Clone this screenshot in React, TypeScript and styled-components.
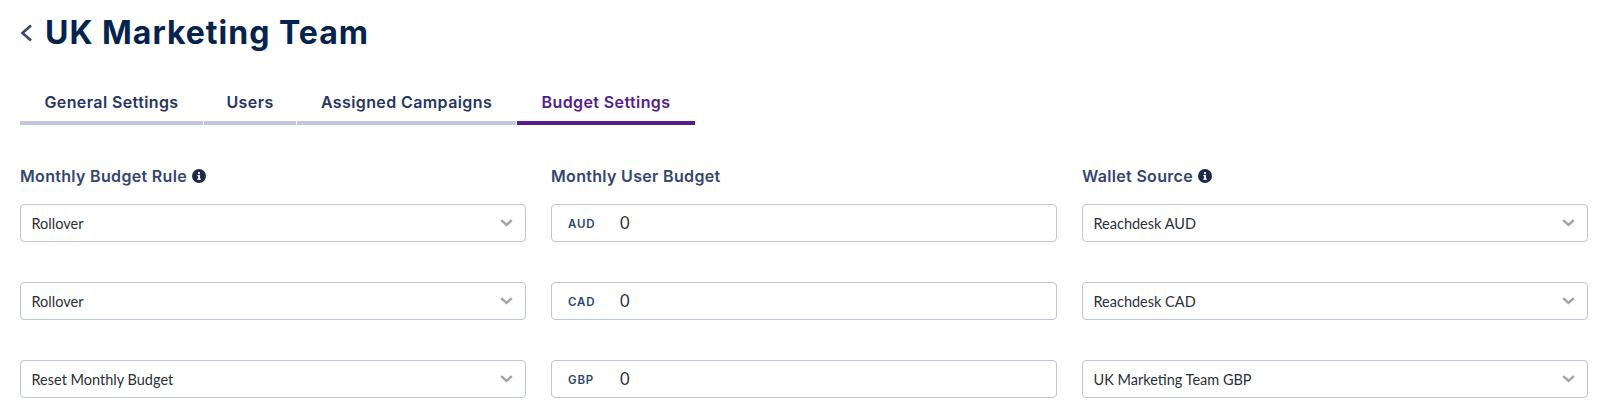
import React from "react";
import styled, { createGlobalStyle } from "styled-components";

const Global = createGlobalStyle`
  html, body { margin: 0; padding: 0; background: #fff; }
  body { font-family: Lato, "Liberation Sans", sans-serif; }
`;

const Page = styled.div`
  width: 1603px;
  height: 415px;
  box-sizing: border-box;
  padding: 12px 15px 0 20px;
  overflow: hidden;
`;

const Header = styled.header`
  display: flex;
  align-items: center;
  gap: 12px;
  height: 42px;
`;

const BackIcon = styled.svg`
  width: 13px;
  height: 18px;
  color: #3a4a70;
  flex: none;
`;

const Title = styled.h1`
  margin: 0;
  font: 700 32px/42px Inter, sans-serif;
  letter-spacing: 1px;
  color: #04234d;
`;

const Tabs = styled.nav`
  display: flex;
  gap: 1px;
  margin-top: 36px;
`;

const Tab = styled.div<{ $active?: boolean; $width: number }>`
  width: ${(p) => p.$width}px;
  box-sizing: border-box;
  height: 35px;
  text-align: center;
  font: 600 16px/25px Inter, sans-serif;
  letter-spacing: 0.4px;
  color: ${(p) => (p.$active ? "#561c8e" : "#28365f")};
  border-bottom: 4px solid ${(p) => (p.$active ? "#561c8e" : "#c0c6db")};
`;

const Grid = styled.div`
  display: grid;
  grid-template-columns: repeat(3, 1fr);
  column-gap: 25px;
  margin-top: 39px;
`;

const Column = styled.section`
  display: flex;
  flex-direction: column;
  gap: 40px;
`;

const Label = styled.div`
  display: flex;
  align-items: center;
  gap: 5px;
  height: 24px;
  margin-bottom: -24px;
  font: 600 16px/24px Inter, sans-serif;
  letter-spacing: 0.32px;
  color: #35456f;
`;

const Info = styled.svg`
  width: 14px;
  height: 14px;
  flex: none;
`;

const Field = styled.div`
  display: flex;
  align-items: center;
  height: 38px;
  box-sizing: border-box;
  background: #fff;
  border: 1px solid #bfc6dc;
  border-radius: 4px;
`;

const SelectField = styled(Field)`
  justify-content: space-between;
  padding: 1px 12px 0 10.5px;
  font: 400 14.5px/20px Lato, sans-serif;
  color: #2b2f36;
`;

const Chevron = styled.svg`
  width: 13px;
  height: 8px;
  color: #a3a3a3;
  flex: none;
  margin-top: -1px;
`;

const Currency = styled.span`
  width: 68px;
  box-sizing: border-box;
  padding: 1px 0 0 16px;
  font: 600 11.5px/16px Inter, sans-serif;
  letter-spacing: 0.8px;
  color: #2f4372;
`;

const Amount = styled.span`
  font: 400 16.5px/20px Lato, sans-serif;
  color: #2b2f36;
`;

const InfoIcon = () => (
  <Info viewBox="0 0 16 16" aria-hidden="true">
    <circle cx="8" cy="8" r="8" fill="#20294a" />
    <rect x="7" y="7" width="2.2" height="5" fill="#fff" />
    <rect x="6" y="7" width="2" height="1.2" fill="#fff" />
    <rect x="6" y="11" width="4.2" height="1.3" fill="#fff" />
    <circle cx="8" cy="4.6" r="1.3" fill="#fff" />
  </Info>
);

const Select = ({ value }: { value: string }) => (
  <SelectField>
    {value}
    <Chevron viewBox="0 0 13 8" fill="none" aria-hidden="true">
      <path d="M1.2 1.2 6.5 6l5.3-4.8" stroke="currentColor" strokeWidth="2.4" />
    </Chevron>
  </SelectField>
);

const Money = ({ code }: { code: string }) => (
  <Field>
    <Currency>{code}</Currency>
    <Amount>0</Amount>
  </Field>
);

const tabs = [
  { label: "General Settings", width: 183 },
  { label: "Users", width: 92 },
  { label: "Assigned Campaigns", width: 219 },
  { label: "Budget Settings", width: 178, active: true },
];

export default function App() {
  return (
    <Page>
      <Global />
      <Header>
        <BackIcon viewBox="0 0 13 18" fill="none" aria-hidden="true">
          <path d="M11 1.5 2.5 9l8.5 7.5" stroke="currentColor" strokeWidth="2.7" />
        </BackIcon>
        <Title>UK Marketing Team</Title>
      </Header>
      <Tabs>
        {tabs.map((t) => (
          <Tab key={t.label} $width={t.width} $active={t.active}>
            {t.label}
          </Tab>
        ))}
      </Tabs>
      <Grid>
        <Column>
          <Label>
            Monthly Budget Rule <InfoIcon />
          </Label>
          <Select value="Rollover" />
          <Select value="Rollover" />
          <Select value="Reset Monthly Budget" />
        </Column>
        <Column>
          <Label>Monthly User Budget</Label>
          <Money code="AUD" />
          <Money code="CAD" />
          <Money code="GBP" />
        </Column>
        <Column>
          <Label>
            Wallet Source <InfoIcon />
          </Label>
          <Select value="Reachdesk AUD" />
          <Select value="Reachdesk CAD" />
          <Select value="UK Marketing Team GBP" />
        </Column>
      </Grid>
    </Page>
  );
}
